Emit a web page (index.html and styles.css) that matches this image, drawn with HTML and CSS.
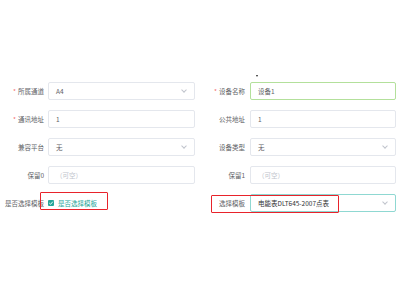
FILE: index.html
```html
<!DOCTYPE html>
<html lang="zh">
<head>
<meta charset="utf-8">
<link rel="stylesheet" href="styles.css">
</head>
<body>
<div class="page">
  <form class="form">
    <div class="item">
      <label class="label"><span class="req">*</span>所属通道</label>
      <div class="input select"><span class="val">A4</span><span class="chev"></span></div>
    </div>
    <div class="item right">
      <label class="label"><span class="req">*</span>设备名称</label>
      <div class="input focus-green"><span class="val">设备1</span></div>
    </div>

    <div class="item">
      <label class="label"><span class="req">*</span>通讯地址</label>
      <div class="input"><span class="val">1</span></div>
    </div>
    <div class="item right">
      <label class="label">公共地址</label>
      <div class="input"><span class="val">1</span></div>
    </div>

    <div class="item">
      <label class="label">兼容平台</label>
      <div class="input select"><span class="val">无</span><span class="chev"></span></div>
    </div>
    <div class="item right">
      <label class="label">设备类型</label>
      <div class="input select"><span class="val">无</span><span class="chev"></span></div>
    </div>

    <div class="item">
      <label class="label">保留0</label>
      <div class="input"><span class="ph">（可空）</span></div>
    </div>
    <div class="item right">
      <label class="label">保留1</label>
      <div class="input"><span class="ph">（可空）</span></div>
    </div>

    <div class="item">
      <label class="label nowrap">是否选择模板</label>
      <div class="check-wrap">
        <span class="checkbox"><svg viewBox="0 0 6 6" width="6" height="6"><path d="M1.3 3.1 L2.6 4.3 L4.8 1.7" fill="none" stroke="#fff" stroke-width="0.9"/></svg></span>
        <span class="check-label">是否选择模板</span>
      </div>
    </div>
    <div class="item right">
      <label class="label">选择模板</label>
      <div class="input select focus-teal"><span class="val dark">电能表DLT645-2007点表</span><span class="chev"></span></div>
    </div>

    <span class="cursor"></span>
    <span class="mark mark-left"></span>
    <span class="mark mark-right"></span>
  </form>
</div>
</body>
</html>
```

FILE: styles.css
```css
html, body {
  margin: 0;
  padding: 0;
  background: #ffffff;
}
body {
  width: 400px;
  height: 300px;
  overflow: hidden;
  font-family: "Noto Sans CJK SC", "Noto Sans", sans-serif;
}
.page {
  padding-top: 82px;
}
.form {
  position: relative;
  display: grid;
  grid-template-columns: 195px 196px;
  column-gap: 5px;
  row-gap: 10px;
  margin: 0;
}
.item {
  display: flex;
  align-items: center;
  gap: 4px;
  height: 18px;
}
.item.right {
  gap: 5px;
}
.label {
  flex: 0 0 44px;
  text-align: right;
  font-size: 6.5px;
  color: #606266;
  white-space: nowrap;
  line-height: 18px;
}
.item.right .label {
  flex-basis: 45px;
}
.req {
  color: #f56c6c;
  margin-right: 2px;
}
.input {
  flex: 1;
  height: 18px;
  box-sizing: border-box;
  border: 1px solid #e4e7ed;
  border-radius: 2px;
  display: flex;
  align-items: center;
  padding: 0 7px;
  font-size: 6.5px;
  color: #606266;
  background: #fff;
}
.val {
  flex: 1;
  white-space: nowrap;
}
.val.dark {
  color: #303133;
}
.ph {
  flex: 1;
  color: #c0c4cc;
  white-space: nowrap;
}
.focus-green {
  border-color: #b3e09b;
}
.focus-teal {
  border-color: #8fd8d2;
}
.chev {
  width: 3px;
  height: 3px;
  border-right: 0.8px solid #c0c4cc;
  border-bottom: 0.8px solid #c0c4cc;
  transform: rotate(45deg);
  margin-top: -2px;
  margin-right: 1px;
}
.check-wrap {
  display: flex;
  align-items: center;
  gap: 4px;
  padding-left: 0;
}
.checkbox {
  width: 6px;
  height: 6px;
  background: #26a69a;
  border-radius: 1px;
  display: flex;
}
.check-label {
  font-size: 6.5px;
  color: #26a69a;
  white-space: nowrap;
}
.cursor {
  position: absolute;
  left: 256px;
  top: -7px;
  width: 0;
  height: 0;
  border-left: 1.5px solid transparent;
  border-right: 1.5px solid transparent;
  border-top: 2.5px solid #222;
}
.mark {
  position: absolute;
  border: 1.5px solid #e8232b;
  box-sizing: border-box;
  border-radius: 1px;
}
.mark-left {
  left: 40px;
  top: 110px;
  width: 68px;
  height: 18px;
}
.mark-right {
  left: 211px;
  top: 113px;
  width: 128px;
  height: 18px;
}
```
